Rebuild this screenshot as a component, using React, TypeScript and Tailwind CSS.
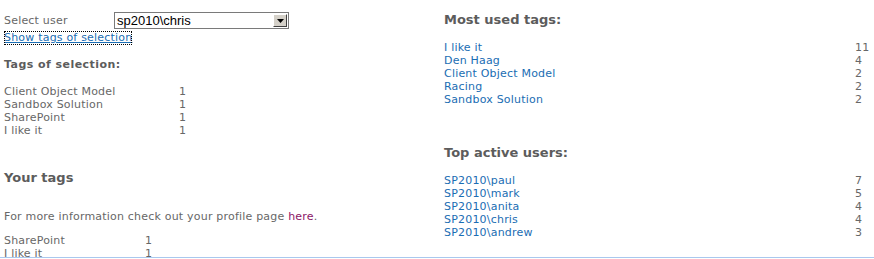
const tagsOfSelection = [
  { name: "Client Object Model", count: 1 },
  { name: "Sandbox Solution", count: 1 },
  { name: "SharePoint", count: 1 },
  { name: "I like it", count: 1 },
];

const yourTags = [
  { name: "SharePoint", count: 1 },
  { name: "I like it", count: 1 },
];

const mostUsed = [
  { name: "I like it", count: 11 },
  { name: "Den Haag", count: 4 },
  { name: "Client Object Model", count: 2 },
  { name: "Racing", count: 2 },
  { name: "Sandbox Solution", count: 2 },
];

const topUsers = [
  { name: "SP2010\\paul", count: 7 },
  { name: "SP2010\\mark", count: 5 },
  { name: "SP2010\\anita", count: 4 },
  { name: "SP2010\\chris", count: 4 },
  { name: "SP2010\\andrew", count: 3 },
];

function Rows({
  items,
  nameWidth,
  link,
}: {
  items: { name: string; count: number }[];
  nameWidth: string;
  link?: boolean;
}) {
  return (
    <div className="flex flex-col">
      {items.map((it) => (
        <div key={it.name} className="flex h-[13px] leading-[13px]">
          <span className={`${nameWidth} shrink-0 ${link ? "text-[#1a6db3]" : ""}`}>
            {it.name}
          </span>
          <span>{it.count}</span>
        </div>
      ))}
    </div>
  );
}

export default function App() {
  return (
    <div className="h-[259px] w-[874px] bg-white font-['DejaVu_Sans',sans-serif] text-[11px] tracking-[0.2px] text-[#676767]">
      <div className="flex h-[258px] border-b border-[#a9c8ee]">
        {/* left column */}
        <div className="w-[444px] shrink-0 pl-1">
          <div className="mt-[12px] flex h-[17px] items-center">
            <span className="w-[110px] shrink-0 leading-[13px]">Select user</span>
            <div className="flex h-[17px] w-[175px] items-center border border-[#7a7a7a] bg-white pl-[2px]">
              <span className="flex-1 font-['Liberation_Sans',sans-serif] text-[13px] leading-[15px] tracking-normal text-black">
                sp2010\chris
              </span>
              <span className="mr-px flex h-[13px] w-[14px] items-center justify-center border border-t-white border-l-white border-r-[#404040] border-b-[#404040] bg-[#d4d0c8]">
                <svg width="7" height="4" viewBox="0 0 7 4">
                  <path d="M0 0h7L3.5 4z" fill="#000" />
                </svg>
              </span>
            </div>
          </div>
          <div className="mt-px">
            <a className="inline-block h-[14px] outline outline-1 outline-dotted outline-black -outline-offset-1 leading-[14px] text-[#1a6db3] underline">
              Show tags of selection
            </a>
          </div>
          <div className="mt-[11px] font-bold leading-[13px] tracking-[0.45px] text-[#5c5c5c]">
            Tags of selection:
          </div>
          <div className="mt-[14px]">
            <Rows items={tagsOfSelection} nameWidth="w-[175px]" />
          </div>
          <div className="mt-[33px] text-[13px] font-bold leading-[16px] tracking-normal text-[#5c5c5c]">
            Your tags
          </div>
          <div className="mt-[24px] leading-[13px]">
            For more information check out your profile page{" "}
            <a className="text-[#8b1466]">here</a>.
          </div>
          <div className="mt-[11px]">
            <Rows items={yourTags} nameWidth="w-[141px]" />
          </div>
        </div>
        {/* right column */}
        <div className="flex-1">
          <div className="mt-[12px] text-[13px] font-bold leading-[16px] tracking-normal text-[#5c5c5c]">
            Most used tags:
          </div>
          <div className="mt-[13px]">
            <Rows items={mostUsed} nameWidth="w-[411px]" link />
          </div>
          <div className="mt-[39px] text-[13px] font-bold leading-[16px] tracking-normal text-[#5c5c5c]">
            Top active users:
          </div>
          <div className="mt-[13px]">
            <Rows items={topUsers} nameWidth="w-[411px]" link />
          </div>
        </div>
      </div>
    </div>
  );
}
